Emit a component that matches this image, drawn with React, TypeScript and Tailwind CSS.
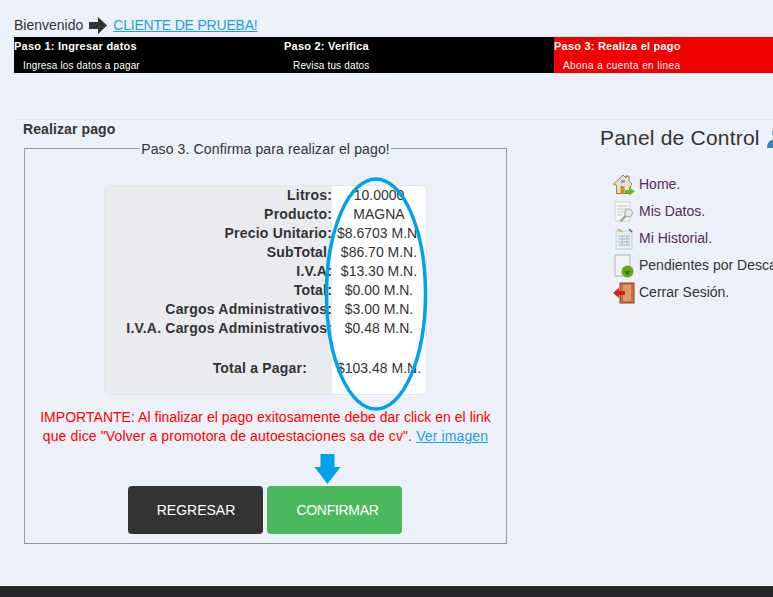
const rows = [
  ["Litros:", "10.0000"],
  ["Producto:", "MAGNA"],
  ["Precio Unitario:", "$8.6703 M.N."],
  ["SubTotal:", "$86.70 M.N."],
  ["I.V.A:", "$13.30 M.N."],
  ["Total:", "$0.00 M.N."],
  ["Cargos Administrativos:", "$3.00 M.N."],
  ["I.V.A. Cargos Administrativos:", "$0.48 M.N."],
]

function HomeIcon() {
  return (
    <svg width="22" height="22" viewBox="0 0 22 22">
      <path d="M0.500 10 10 1l3 3V2h3v5l3 3-1.500 1.500v8h-14v-8z" fill="#e8e0cc" stroke="#a8763a" />
      <rect x="7.500" y="12" width="4" height="8" fill="#d08a30" />
      <rect x="8" y="6" width="4" height="3" fill="#7fa8d8" />
      <path d="M12 16h4v-3l6 4.500-6 4v-2.500h-4z" fill="#6cb82c" />
    </svg>
  )
}

function DatosIcon() {
  return (
    <svg width="22" height="22" viewBox="0 0 22 22">
      <rect x="2" y="1" width="15" height="19" fill="#f6f6f6" stroke="#d4d4d4" />
      <path d="M4 5h11M4 8h11M4 11h7M4 14h5" stroke="#c4c4c4" />
      <circle cx="15.500" cy="12" r="4" fill="#e8e8e8" stroke="#a8a8a8" />
      <path d="m12.500 15-5 5.500" stroke="#a0a0a0" strokeWidth="2.500" />
    </svg>
  )
}

function HistorialIcon() {
  return (
    <svg width="22" height="22" viewBox="0 0 22 22">
      <rect x="3" y="3" width="16" height="18" fill="#e6eef5" stroke="#c4ccd2" />
      <path d="M5 8h12M5 11h12M5 14h12M5 17h12M9 8v10M14 8v10" stroke="#a8bccb" />
      <path d="M5 1 9 4" stroke="#e0a040" strokeWidth="1.500" />
      <path d="m16 1 3 3" stroke="#666" strokeWidth="1.500" />
    </svg>
  )
}

function PendientesIcon() {
  return (
    <svg width="22" height="24" viewBox="0 0 22 24">
      <rect x="2" y="1" width="15" height="21" fill="#f2f2f2" stroke="#b4b4b4" />
      <circle cx="14.500" cy="17.500" r="6" fill="#62ab18" />
      <path d="M11 17h7l-3.500 4z" fill="#2f6e08" />
    </svg>
  )
}

function CerrarIcon() {
  return (
    <svg width="22" height="22" viewBox="0 0 22 22">
      <rect x="7" y="1" width="14" height="20" fill="#c8703c" stroke="#8a4520" />
      <rect x="10" y="3" width="8" height="16" fill="#dc9a68" />
      <path d="M0 11 6 6v3h6v4H6v3z" fill="#dd1c1c" />
    </svg>
  )
}

const menu = [
  { label: "Home.", icon: <HomeIcon />, color: "text-[#5a2a5c]" },
  { label: "Mis Datos.", icon: <DatosIcon />, color: "text-[#5a2a5c]" },
  { label: "Mi Historial.", icon: <HistorialIcon />, color: "text-[#5a2a5c]" },
  { label: "Pendientes por Descargar.", icon: <PendientesIcon />, color: "text-[#333333]" },
  { label: "Cerrar Sesión.", icon: <CerrarIcon />, color: "text-[#333333]" },
]

export default function App() {
  return (
    <div className="h-[597px] w-[773px] overflow-hidden bg-[#ecf0f8] flex flex-col font-['Liberation_Sans',Arial,sans-serif] text-[14px] text-[#333333]">
      <div className="pl-[14px] pt-[13px] h-[37px] flex items-center gap-[5px] leading-[20px]">
        <span>Bienvenido</span>
        <svg width="19" height="17" viewBox="0 0 19 17">
          <path d="M1 5h9V0l9 8.500-9 8.500v-5H1z" fill="#333333" />
        </svg>
        <a className="ml-[1px] tracking-[-0.2px] text-[#1ba1e2] underline">CLIENTE DE PRUEBA!</a>
      </div>

      <div className="ml-[14px] h-[36px] grid grid-cols-[270px_270px_1fr] text-white text-[10px] tracking-[0.16px]">
        <div className="bg-black">
          <div className="font-bold text-[11px] tracking-[0.22px] h-[18px] leading-[18px]">Paso 1: Ingresar datos</div>
          <div className="pl-[9px] h-[18px] leading-[22px]">Ingresa los datos a pagar</div>
        </div>
        <div className="bg-black">
          <div className="font-bold text-[11px] tracking-[0.22px] h-[18px] leading-[18px]">Paso 2: Verifica</div>
          <div className="pl-[9px] h-[18px] leading-[22px]">Revisa tus datos</div>
        </div>
        <div className="bg-[#f00000]">
          <div className="font-bold text-[11px] tracking-[0.22px] h-[18px] leading-[18px]">Paso 3: Realiza el pago</div>
          <div className="pl-[9px] h-[18px] tracking-[0.42px] leading-[22px]">Abona a cuenta en linea</div>
        </div>
      </div>

      <div className="ml-[14px] mt-[46px] border-t border-[#e2e4ea] flex">
        <div className="pl-[9px] w-[586px] shrink-0">
          <h2 className="font-bold tracking-[0.1px] h-[19px] leading-[18px]">Realizar pago</h2>
          <fieldset className="relative w-[483px] h-[405px] ml-[1px] border border-[#999999] text-center">
            <legend className="mx-auto px-[1px] pt-[2px] tracking-[0.13px] leading-[16px] h-[18px]">Paso 3. Confirma para realizar el pago!</legend>

            <div className="mx-auto mt-[28px] w-[323px] h-[210px] rounded-[5px] border border-[#e3e5ea] overflow-hidden grid grid-cols-[227px_1fr]">
              <div className="bg-[#e9ebee] font-bold tracking-[0.2px] text-right">
                {rows.map(([label]) => (
                  <div key={label} className="h-[19px] leading-[19px]">{label}</div>
                ))}
                <div className="mt-[21px] pr-[25px] h-[19px] leading-[19px]">Total a Pagar:</div>
              </div>
              <div className="bg-white text-center whitespace-nowrap">
                {rows.map(([label, value]) => (
                  <div key={label} className="h-[19px] leading-[19px]">{value}</div>
                ))}
                <div className="mt-[21px] h-[19px] leading-[19px]">$103.48 M.N.</div>
              </div>
            </div>

            <p className="mt-[13px] leading-[19px] text-[#ff0000]">
              <span className="tracking-[0.03px]">IMPORTANTE: Al finalizar el pago exitosamente debe dar click en el link</span>
              <br />
              <span className="tracking-[0.12px]">que dice "Volver a promotora de autoestaciones sa de cv". <a className="text-[#1ba1e2] underline">Ver imagen</a></span>
            </p>

            <div className="flex justify-center pl-[124px] mt-[8px]">
              <svg width="27" height="30" viewBox="0 0 27 30" className="shrink-0">
                <path d="M6.500 0h14v13h6L13.500 30 .5 13h6z" fill="#00a2e8" />
              </svg>
            </div>

            <div className="flex justify-center gap-[4px] mt-[2px] pr-[2px]">
              <button className="w-[135px] h-[48px] pl-[2px] rounded-[4px] bg-[#333333] text-white">REGRESAR</button>
              <button className="w-[135px] h-[48px] pl-[7px] tracking-[-0.3px] rounded-[4px] bg-[#4cb85c] text-white">CONFIRMAR</button>
            </div>

            <svg width="106" height="236" viewBox="0 0 106 236" className="absolute left-[298px] top-[19px]">
              <ellipse cx="53" cy="118" rx="49.500" ry="115" fill="none" stroke="#00a2e8" strokeWidth="3.500" />
            </svg>
          </fieldset>
        </div>

        <div className="min-w-0 flex-1">
          <div className="flex items-center whitespace-nowrap gap-[6px] mt-[3px] h-[30px] text-[21px] tracking-[0.2px] leading-[30px]">
            Panel de Control
            <svg width="22" height="22" viewBox="0 0 22 22" className="shrink-0">
              <circle cx="11" cy="6" r="5" fill="#5c9bd1" />
              <path d="M1 21c0-7 4-9 10-9s10 2 10 9z" fill="#3f7fb8" />
            </svg>
          </div>
          <ul className="mt-[18px] ml-[13px] whitespace-nowrap">
            {menu.map((item) => (
              <li key={item.label} className="h-[27px] flex items-center gap-[4px]">
                <span className="w-[22px] flex justify-center shrink-0">{item.icon}</span>
                <a className={item.color}>{item.label}</a>
              </li>
            ))}
          </ul>
        </div>
      </div>

      <div className="mt-auto h-[12px] bg-[#25272b] border-t border-white" />
    </div>
  )
}
